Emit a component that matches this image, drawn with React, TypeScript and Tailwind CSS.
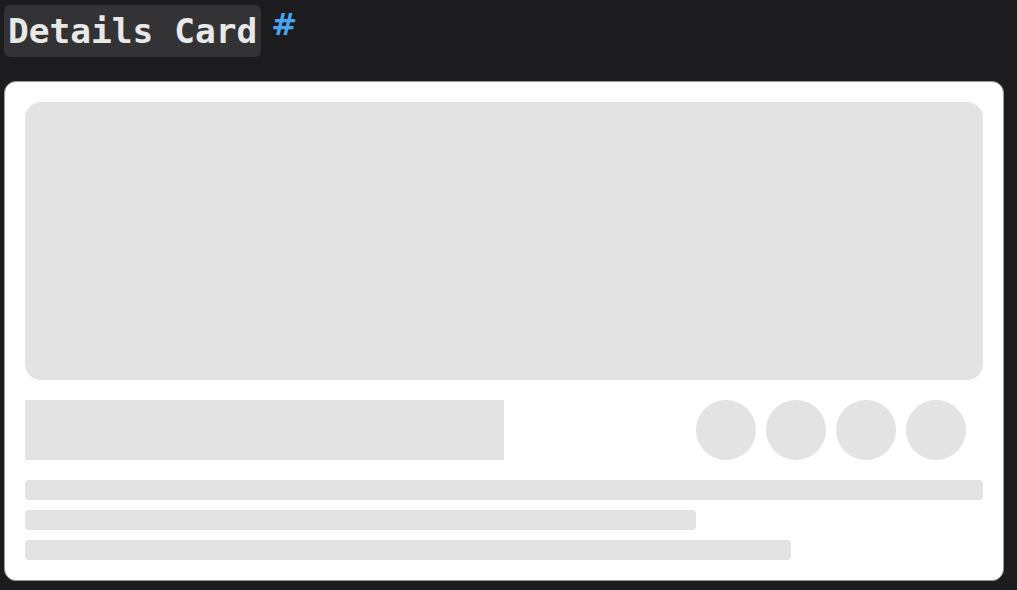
import React from "react";

const Circle = () => <div className="w-[60px] h-[60px] rounded-full bg-[#e3e3e3] shrink-0" />;

const App: React.FC = () => {
  return (
    <div className="w-[1017px] h-[590px] bg-[#1c1c1e] overflow-hidden">
      {/* Heading */}
      <div className="flex items-start pt-[5px] pl-[4px] h-[81px]">
        <h2 className="bg-[#333335] rounded-[6px] px-[4px] h-[52px] flex items-center text-[34.5px] font-bold text-[#e8e8e8] font-['DejaVu_Sans_Mono',monospace] leading-none">
          Details Card
        </h2>
        <span className="ml-[10px] mt-[4px] text-[31px] font-bold text-[#4aa3f0] font-['DejaVu_Sans',sans-serif] leading-none">
          #
        </span>
      </div>

      {/* Card */}
      <div className="ml-[4px] w-[1000px] bg-white border border-[#9a9a9a] rounded-[12px] p-[20px] flex flex-col">
        <div className="h-[278px] rounded-[16px] bg-[#e3e3e3]" />
        <div className="mt-[20px] flex items-center justify-between">
          <div className="w-1/2 h-[60px] bg-[#e3e3e3]" />
          <div className="flex gap-[10px] mr-[17px]">
            <Circle />
            <Circle />
            <Circle />
            <Circle />
          </div>
        </div>
        <div className="mt-[20px] flex flex-col gap-[10px]">
          <div className="h-[20px] w-full rounded-[4px] bg-[#e3e3e3]" />
          <div className="h-[20px] w-[70%] rounded-[4px] bg-[#e3e3e3]" />
          <div className="h-[20px] w-[80%] rounded-[4px] bg-[#e3e3e3]" />
        </div>
      </div>
    </div>
  );
};

export default App;
